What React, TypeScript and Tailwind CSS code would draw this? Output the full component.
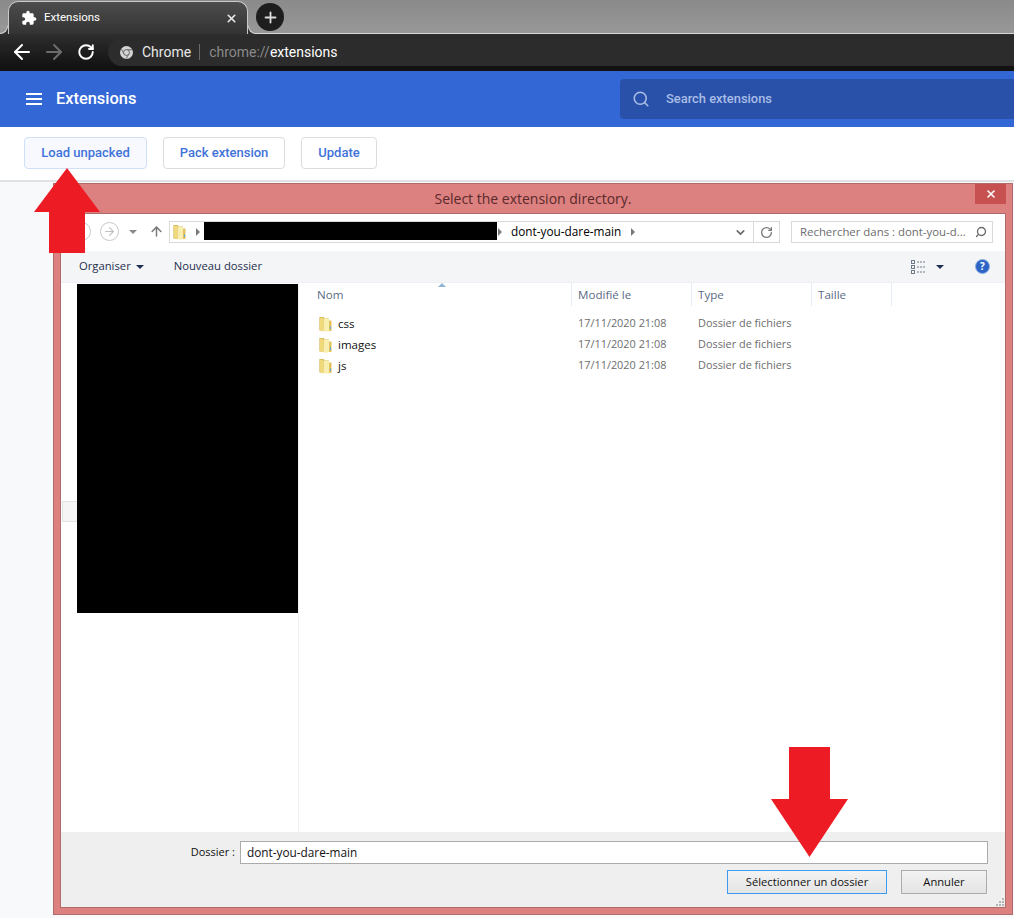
import React from 'react';
import { ArrowLeft, ArrowRight, RotateCw, X, Plus, Search, ChevronDown, ArrowUp } from 'lucide-react';

const ui = "font-['Open_Sans','Noto_Sans',sans-serif]";
const robo = "font-['Roboto','Liberation_Sans',sans-serif]";

const files = ['css', 'images', 'js'];

function Puzzle({ className }: { className?: string }) {
  return (
    <svg viewBox="0 0 24 24" className={className} fill="currentColor">
      <path d="M20.5 11H19V7c0-1.1-.9-2-2-2h-4V3.5C13 2.12 11.88 1 10.5 1S8 2.12 8 3.5V5H4c-1.1 0-1.99.9-1.99 2v3.8H3.5c1.49 0 2.7 1.21 2.7 2.7s-1.21 2.7-2.7 2.7H2V20c0 1.1.9 2 2 2h3.8v-1.5c0-1.49 1.21-2.7 2.7-2.7 1.49 0 2.7 1.21 2.7 2.7V22H17c1.1 0 2-.9 2-2v-4h1.5c1.38 0 2.5-1.12 2.5-2.5S21.88 11 20.5 11z" />
    </svg>
  );
}

function ChromeLogo() {
  return (
    <svg viewBox="0 0 16 16" className="w-[13px] h-[13px]">
      <circle cx="8" cy="8" r="8" fill="#d5d5d5" />
      <path d="M8 4.6h7.2M5 9.8 1.6 3.6M10.9 9.8 7.4 15.8" stroke="#6a6a6a" strokeWidth="1.2" />
      <circle cx="8" cy="8" r="3.6" fill="#d5d5d5" stroke="#4a4a4a" strokeWidth="1" />
    </svg>
  );
}

function Folder() {
  return (
    <svg viewBox="0 0 13 16" className="w-[13px] h-[16px] shrink-0">
      <path d="M0.500 1h4l1.500 1.500h4v12h-9.500z" fill="#c9a53c" />
      <path d="M1 1.500h3.500v14l-3.500-1.500z" fill="#f0d978" />
      <path d="M4.500 2.500h5.500v13h-5.500z" fill="#f8eeb0" />
      <path d="M10 4.500h2.500v10.500h-2.500z" fill="#e3c25e" />
      <rect x="11" y="10.500" width="1" height="2.500" fill="#58a5da" />
    </svg>
  );
}

function PageButton({ label, active, width }: { label: string; active?: boolean; width: string }) {
  return (
    <button className={`${width} h-[32px] rounded border text-[13px] font-medium text-[#3f73d9] ${robo} ${active ? 'bg-[#f7f9ff] border-[#cfe0f7]' : 'bg-white border-[#dadce0]'}`}>
      {label}
    </button>
  );
}

function ColHead({ label, width }: { label: string; width: string }) {
  return (
    <div className={`${width} h-[23px] pl-[6px] border-r border-[#e6ecf3] text-[#5b6b85] text-[11.600px] leading-[23px]`}>{label}</div>
  );
}

export default function App() {
  return (
    <div className="relative w-[1014px] h-[918px] overflow-hidden bg-[#f8f9fa]">
      {/* tab strip */}
      <div className="h-[34px] bg-gradient-to-b from-[#8a8a8a] to-[#989898] border-b border-[#d8d8d8] flex items-end pl-[8px]">
        <div className={`relative w-[240px] h-[33px] -mb-px rounded-t-[10px] border border-b-0 border-[#c9c9c9] bg-gradient-to-b from-[#4d4d4d] to-[#333333] flex items-center pl-[12px] pr-[9px] text-white text-[11.500px] ${robo}`}>
          <div className="absolute -left-[9px] bottom-0 w-[8px] h-[8px] bg-[#333333]">
            <div className="w-full h-full bg-[#969696] rounded-br-[8px] border-r border-b border-[#d8d8d8]" />
          </div>
          <div className="absolute -right-[9px] bottom-0 w-[8px] h-[8px] bg-[#333333]">
            <div className="w-full h-full bg-[#969696] rounded-bl-[8px] border-l border-b border-[#d8d8d8]" />
          </div>
          <Puzzle className="w-[16px] h-[16px] text-white" />
          <span className="ml-[7px] flex-1">Extensions</span>
          <X size={13} strokeWidth={3} className="text-[#e8e8e8]" />
        </div>
        <div className="ml-[8px] mb-[2px] w-[28px] h-[28px] rounded-full bg-[#1e1e1e] flex items-center justify-center">
          <Plus size={17} strokeWidth={2.6} className="text-[#dcdcdc]" />
        </div>
      </div>

      {/* browser toolbar */}
      <div className="h-[32px] pt-[4px] bg-gradient-to-b from-[#2e2e2e] to-[#131313] flex items-center pl-[10px] text-white">
        <ArrowLeft size={24} strokeWidth={2} />
        <ArrowRight size={24} strokeWidth={2} className="ml-[8px] text-[#6c6c6c]" />
        <RotateCw size={18} strokeWidth={2.6} className="ml-[11px]" />
        <div className={`ml-[13px] flex-1 h-[28px] rounded-l-full bg-[#2c2c2c] flex items-center pl-[12px] text-[14px] ${robo}`}>
          <ChromeLogo />
          <span className="ml-[9px] text-[#e8e8e8]">Chrome</span>
          <span className="ml-[8px] mr-[9px] w-px h-[16px] bg-[#6a6a6a]" />
          <span className="text-[#8a8a8a]">chrome://</span>
          <span className="text-white">extensions</span>
        </div>
      </div>
      <div className="h-[5px] bg-[#121212]" />

      {/* extensions header */}
      <header className={`h-[56px] bg-[#3367d6] flex items-center pl-[26px] ${robo}`}>
        <div className="w-[16px] flex flex-col gap-[3px]">
          <span className="h-[2px] bg-white" />
          <span className="h-[2px] bg-white" />
          <span className="h-[2px] bg-white" />
        </div>
        <span className="ml-[14px] mt-[1px] text-white text-[16.400px] font-medium">Extensions</span>
        <div className="ml-auto w-[394px] h-[40px] rounded-l bg-[#2a51a9] flex items-center pl-[12px] text-[#a9bde6]">
          <Search size={18} strokeWidth={2} />
          <span className="ml-[16px] text-[12.900px] font-medium">Search extensions</span>
        </div>
      </header>

      {/* dev actions */}
      <div className="h-[55px] bg-white border-b-2 border-[#dfe1e3] flex items-start pt-[10px] pl-[24px] gap-[16px]">
        <PageButton label="Load unpacked" active width="w-[123px]" />
        <PageButton label="Pack extension" width="w-[122px]" />
        <PageButton label="Update" width="w-[76px]" />
      </div>

      {/* file picker window */}
      <div className={`absolute left-[53px] top-[183px] w-[960px] h-[732px] bg-[#dc8080] border border-[#b06a6a] flex flex-col pl-[6px] pr-[6px] pb-[6px] text-[11.400px] ${ui}`}>
        <div className="relative h-[29px] shrink-0 flex items-center justify-center text-[14px] text-[#5a2a2a]">
          Select the extension directory.
          <div className="absolute right-0 top-0 w-[31px] h-[20px] bg-[#c75050] flex items-center justify-center">
            <X size={12} strokeWidth={3.2} className="text-white" />
          </div>
        </div>

        <div className="relative flex-1 flex flex-col border border-[#b06a6a] bg-white min-h-0">
          {/* address row */}
          <div className="h-[37px] shrink-0 flex items-start pt-[7px] pl-[11px] text-[11.800px]">
            <div className="mt-[1px] w-[19px] h-[19px] rounded-full border border-[#c8c8c8]" />
            <div className="mt-[1px] ml-[9px] w-[19px] h-[19px] rounded-full border border-[#c8c8c8] flex items-center justify-center text-[#c0c0c0]">
              <ArrowRight size={13} strokeWidth={2} />
            </div>
            <span className="mt-[9px] ml-[10px] w-0 h-0 border-l-[4px] border-r-[4px] border-t-[4px] border-l-transparent border-r-transparent border-t-[#8a8a8a]" />
            <ArrowUp size={15} strokeWidth={2.4} className="mt-[3px] ml-[12px] text-[#7a7a7a]" />
            <div className="ml-[5px] w-[611px] h-[22px] border border-[#d9d9d9] flex items-center">
              <span className="ml-[3px]"><Folder /></span>
              <span className="ml-[10px] w-0 h-0 border-t-[4px] border-b-[4px] border-l-[4px] border-t-transparent border-b-transparent border-l-[#7a7a7a]" />
              <div className="ml-[4px] w-[293px] h-[18px] self-start bg-black" />
              <span className="ml-[1px] w-0 h-0 border-t-[4px] border-b-[4px] border-l-[4px] border-t-transparent border-b-transparent border-l-[#7a7a7a]" />
              <span className="ml-[9px] text-black">dont-you-dare-main</span>
              <span className="ml-[10px] w-0 h-0 border-t-[4px] border-b-[4px] border-l-[4px] border-t-transparent border-b-transparent border-l-[#7a7a7a]" />
              <ChevronDown size={13} strokeWidth={3} className="ml-auto mr-[6px] text-[#6a6a6a]" />
              <div className="w-[26px] h-full border-l border-[#d9d9d9] flex items-center justify-center text-[#7a7a7a]">
                <RotateCw size={13} strokeWidth={2.4} />
              </div>
            </div>
            <div className="ml-[11px] w-[202px] h-[22px] border border-[#d9d9d9] flex items-center pl-[8px] pr-[5px] text-[#6d6d6d]">
              <span className="flex-1 text-[11.400px] whitespace-nowrap">Rechercher dans : dont-you-d...</span>
              <Search size={12} strokeWidth={2.6} className="text-[#6a6a6a] -scale-x-100" />
            </div>
          </div>

          {/* command bar */}
          <div className="h-[31px] shrink-0 bg-[#f4f5f7] flex items-center pl-[18px] pr-[15px] text-[#1f2f4f] text-[11.250px]">
            <span>Organiser</span>
            <span className="ml-[5px] w-0 h-0 border-l-[4px] border-r-[4px] border-t-[4px] border-l-transparent border-r-transparent border-t-[#1f2f4f]" />
            <span className="ml-[30px]">Nouveau dossier</span>
            <svg viewBox="0 0 16 14" className="ml-auto w-[16px] h-[14px]" fill="none" stroke="#6f7a8a">
              <rect x="0.5" y="0.5" width="3" height="3" />
              <rect x="0.5" y="5.5" width="3" height="3" />
              <rect x="0.5" y="10.5" width="3" height="3" />
              <path d="M6 2h9M6 7h9M6 12h9" strokeDasharray="2 1" />
            </svg>
            <span className="ml-[9px] w-0 h-0 border-l-[4px] border-r-[4px] border-t-[4px] border-l-transparent border-r-transparent border-t-[#1f2f4f]" />
            <div className="ml-[31px] w-[15px] h-[15px] rounded-full bg-[#2c63c4] border border-[#8fb0e4] text-white text-[10px] font-bold leading-[13px] text-center">?</div>
          </div>

          {/* panes */}
          <div className="flex-1 flex min-h-0 border-t border-[#eef0f3]">
            <div className="w-[238px] shrink-0 pl-[16px] pt-[1px] border-r border-[#f1f1f1] relative">
              <div className="w-[221px] h-[329px] bg-black" />
              <div className="absolute left-[1px] top-[218px] w-[15px] h-[21px] bg-[#f5f5f5] border border-[#e2e2e2] border-r-0" />
            </div>
            <div className="flex-1 pl-[12px] min-w-0">
              <div className="flex relative">
                <ColHead label="Nom" width="w-[261px]" />
                <ColHead label="Modifié le" width="w-[120px]" />
                <ColHead label="Type" width="w-[120px]" />
                <ColHead label="Taille" width="w-[80px]" />
                <span className="absolute left-[127px] top-0 w-0 h-0 border-l-[4px] border-r-[4px] border-b-[4px] border-l-transparent border-r-transparent border-b-[#8fb4d4]" />
              </div>
              <div className="mt-[7px] flex flex-col">
                {files.map((name) => (
                  <div key={name} className="h-[21px] flex items-center text-[10.900px]">
                    <div className="w-[261px] pl-[8px] flex items-center text-[#111] text-[11.500px]">
                      <Folder />
                      <span className="ml-[6px]">{name}</span>
                    </div>
                    <div className="w-[120px] pl-[6px] text-[#6d6d6d]">17/11/2020 21:08</div>
                    <div className="pl-[6px] text-[#6d6d6d]">Dossier de fichiers</div>
                  </div>
                ))}
              </div>
            </div>
          </div>

          {/* footer */}
          <div className="h-[75px] shrink-0 bg-[#efefef] flex flex-col items-end pt-[9px] pr-[17px]">
            <div className="flex items-center text-[#111]">
              <span className="mr-[5px] text-[11px]">Dossier :</span>
              <div className="w-[748px] h-[23px] bg-white border border-[#ababab] pl-[6px] leading-[20px] text-[11.800px]">dont-you-dare-main</div>
            </div>
            <div className="mt-[6px] mr-[1px] flex gap-[14px] text-[11.200px]">
              <button className="w-[160px] h-[24px] border border-[#3c9bf0] bg-gradient-to-b from-[#f3f3f3] to-[#e4e4e4] text-[#111]">Sélectionner un dossier</button>
              <button className="w-[86px] h-[24px] border border-[#acacac] bg-gradient-to-b from-[#f3f3f3] to-[#e4e4e4] text-[#111]">Annuler</button>
            </div>
          </div>

          {/* resize grip */}
          <svg viewBox="0 0 8 8" className="absolute right-[1px] bottom-[1px] w-[8px] h-[8px]" fill="#b4b4b4">
            <rect x="6" y="0" width="2" height="2" />
            <rect x="3" y="3" width="2" height="2" />
            <rect x="6" y="3" width="2" height="2" />
            <rect x="0" y="6" width="2" height="2" />
            <rect x="3" y="6" width="2" height="2" />
            <rect x="6" y="6" width="2" height="2" />
          </svg>
        </div>
      </div>

      {/* annotation arrows */}
      <svg viewBox="0 0 68 86" className="absolute left-[33px] top-[167px] w-[68px] h-[86px]" fill="#ed1c24">
        <path d="M34 1 67 45H52V86H16V45H1z" />
      </svg>
      <svg viewBox="0 0 78 111" className="absolute left-[771px] top-[747px] w-[78px] h-[111px]" fill="#ed1c24">
        <path d="M18 0H59V52H77L38.500 110 0 52H18z" />
      </svg>
    </div>
  );
}
